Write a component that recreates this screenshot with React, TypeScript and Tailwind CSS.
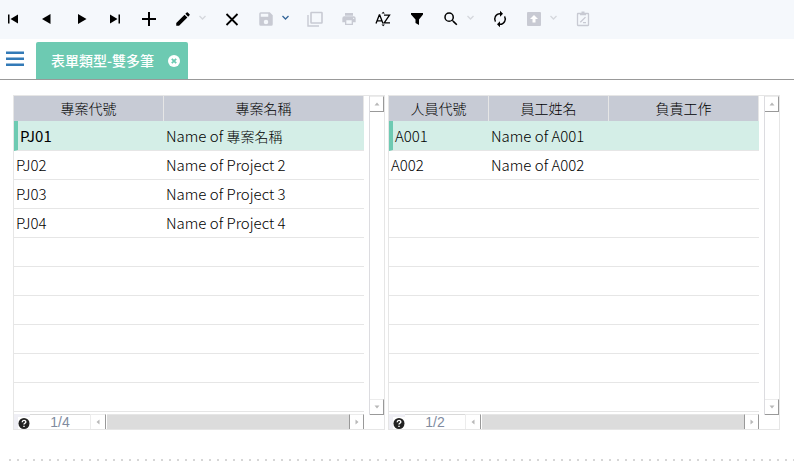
import { ReactNode } from "react";

type Column = { title: string; width: string };

function ToolButton({ label, children, muted = false }: { label: string; children: ReactNode; muted?: boolean }) {
  return (
    <button
      type="button"
      aria-label={label}
      className={`flex h-6 w-6 items-center justify-center ${muted ? "text-[#c8cad3]" : "text-black"}`}
    >
      {children}
    </button>
  );
}

function MenuButton({ label, active = false }: { label: string; active?: boolean }) {
  return (
    <button
      type="button"
      aria-label={label}
      className={`flex h-6 w-[15px] items-center justify-center pb-0.5 ${active ? "text-[#35679a]" : "text-[#d5d8dd]"}`}
    >
      <svg width="9" height="6" viewBox="0 0 9 6" fill="none" stroke="currentColor" strokeWidth="1.3">
        <path d="M1.500 1l3 3 3-3" />
      </svg>
    </button>
  );
}

function Glyph({ d, size = 18 }: { d: string; size?: number }) {
  return (
    <svg width={size} height={size} viewBox="0 0 24 24" fill="currentColor">
      <path d={d} />
    </svg>
  );
}

function Toolbar() {
  return (
    <div role="toolbar" className="flex h-[39px] items-start gap-[10px] bg-[#f5f8fc] pt-[7px] pl-px">
      <ToolButton label="First record">
        <svg width="12" height="12" viewBox="0 0 12 12" fill="currentColor">
          <path d="M1 1.500h1.500v9H1zM11 1.500v9L3.500 6z" />
        </svg>
      </ToolButton>
      <ToolButton label="Previous record">
        <svg width="12" height="12" viewBox="0 0 12 12" fill="currentColor">
          <path d="M9.500 1v10L1 6z" />
        </svg>
      </ToolButton>
      <ToolButton label="Next record">
        <svg width="12" height="12" viewBox="0 0 12 12" fill="currentColor">
          <path d="M3 1v10l8.500-5z" />
        </svg>
      </ToolButton>
      <ToolButton label="Last record">
        <svg width="12" height="12" viewBox="0 0 12 12" fill="currentColor">
          <path d="M9.500 1.500H11v9H9.500zM1 1.500v9L8.500 6z" />
        </svg>
      </ToolButton>
      <ToolButton label="Add">
        <svg width="14" height="14" viewBox="0 0 14 14" fill="currentColor">
          <path d="M6 0h2v6h6v2H8v6H6V8H0V6h6z" />
        </svg>
      </ToolButton>
      <div className="flex">
        <ToolButton label="Edit">
          <Glyph d="M3 17.250V21h3.750L17.810 9.940l-3.750-3.750L3 17.250zM20.710 7.040a1 1 0 0 0 0-1.410l-2.340-2.340a1 1 0 0 0-1.410 0l-1.830 1.830 3.750 3.750 1.830-1.830z" />
        </ToolButton>
        <MenuButton label="Edit options" />
      </div>
      <ToolButton label="Delete">
        <svg width="14" height="14" viewBox="0 0 14 14" fill="none" stroke="currentColor" strokeWidth="1.800">
          <path d="M1.500 2l11 11M12.500 2l-11 11" />
        </svg>
      </ToolButton>
      <div className="flex">
        <ToolButton label="Save" muted>
          <Glyph d="M17 3H5a2 2 0 0 0-2 2v14a2 2 0 0 0 2 2h14a2 2 0 0 0 2-2V7l-4-4zm-5 16a3 3 0 1 1 0-6 3 3 0 0 1 0 6zm3-10H5V5h10v4z" />
        </ToolButton>
        <MenuButton label="Save options" active />
      </div>
      <ToolButton label="Copy" muted>
        <svg width="16" height="16" viewBox="0 0 16 16" fill="none" stroke="currentColor">
          <rect x="4" y="1.500" width="11" height="10.500" rx="0.500" strokeWidth="1.600" />
          <path d="M1 4v11h11" strokeWidth="1.400" />
        </svg>
      </ToolButton>
      <ToolButton label="Print" muted>
        <Glyph
          size={16}
          d="M19 8H5a3 3 0 0 0-3 3v6h4v4h12v-4h4v-6a3 3 0 0 0-3-3zm-3 11H8v-5h8v5zm3-7a1 1 0 1 1 0-2 1 1 0 0 1 0 2zM18 3H6v4h12V3z"
        />
      </ToolButton>
      <ToolButton label="Sort">
        <svg width="16" height="16" viewBox="0 0 16 16" fill="none" stroke="currentColor" strokeWidth="1.300">
          <path d="M1 12.500L4.300 4h.4L8 12.500M2.200 9.800h4.600M9 4.200h5.500L9.200 11.800H15" />
          <path d="M6.500 2.500L8.200 .8l1.700 1.700zM6.500 13.500l1.700 1.700 1.700-1.700z" fill="currentColor" stroke="none" />
        </svg>
      </ToolButton>
      <ToolButton label="Filter">
        <svg width="14" height="14" viewBox="0 0 14 14" fill="currentColor">
          <path d="M1 1h12v1.500L9 7.500V13L5.500 11V7.500L1 2.500z" />
        </svg>
      </ToolButton>
      <div className="flex">
        <ToolButton label="Search">
          <Glyph d="M15.500 14h-.79l-.28-.27A6.471 6.471 0 0 0 16 9.500 6.500 6.500 0 1 0 9.500 16c1.610 0 3.090-.59 4.230-1.570l.27.28v.79l5 4.990L20.490 19l-4.990-5zm-6 0a4.500 4.500 0 1 1 0-9 4.500 4.500 0 0 1 0 9z" />
        </ToolButton>
        <MenuButton label="Search options" />
      </div>
      <ToolButton label="Refresh">
        <Glyph d="M12 6v3l4-4-4-4v3a8 8 0 0 0-6.760 12.260L6.700 14.800A5.870 5.870 0 0 1 6 12a6 6 0 0 1 6-6zm6.760 1.740L17.300 9.200A6 6 0 0 1 12 18v-3l-4 4 4 4v-3a8 8 0 0 0 6.760-12.260z" />
      </ToolButton>
      <div className="flex">
        <ToolButton label="Upload" muted>
          <svg width="14" height="14" viewBox="0 0 14 14">
            <rect width="14" height="14" rx="1" fill="currentColor" />
            <path d="M7 3l4 4H8.500v3.500h-3V7H3z" fill="white" />
          </svg>
        </ToolButton>
        <MenuButton label="Upload options" />
      </div>
      <ToolButton label="Approve" muted>
        <svg width="14" height="16" viewBox="0 0 14 16" fill="none" stroke="currentColor" strokeWidth="1.300">
          <rect x="1.500" y="2.500" width="11" height="12" rx="0.500" />
          <path d="M4 3.300h6M5.500 1.500h3" strokeWidth="1.800" />
          <path d="M7 11.700h3M4.300 11.300L9.500 6.100" strokeWidth="1.300" />
        </svg>
      </ToolButton>
    </div>
  );
}

function TabBar() {
  return (
    <div className="flex h-[41px] items-end border-b border-[#999999]">
      <button type="button" aria-label="Menu" className="flex h-[37px] w-9 items-center pl-1.5 text-[#337ab7]">
        <svg width="18" height="16" viewBox="0 0 18 16" fill="currentColor" className="mb-1">
          <path d="M0 .5h18V3H0zM0 6.500h18V9H0zM0 12.500h18V15H0z" />
        </svg>
      </button>
      <div className="flex h-[37px] items-center rounded-t-xs bg-[#6dcab2] pr-2 pl-[15px] text-white">
        <a href="#form" className="pb-0.5 text-sm font-medium">
          表單類型-雙多筆
        </a>
        <button type="button" aria-label="Close tab" className="ml-3.5">
          <svg width="12" height="12" viewBox="0 0 12 12">
            <circle cx="6" cy="6" r="6" fill="white" />
            <path d="M3.800 3.800l4.400 4.400M8.200 3.800L3.800 8.200" stroke="#6dcab2" strokeWidth="1.800" />
          </svg>
        </button>
      </div>
    </div>
  );
}

function Arrow({ d }: { d: string }) {
  return (
    <svg width="6" height="6" viewBox="0 0 6 6" fill="#b8b8b8">
      <path d={d} />
    </svg>
  );
}

function DataGrid({
  columns,
  rows,
  page,
  name,
  boldKey = false,
}: {
  columns: Column[];
  rows: ReactNode[][];
  page: string;
  name: string;
  boldKey?: boolean;
}) {
  const lines = Array.from({ length: 10 }, (_, i) => rows[i] ?? columns.map(() => ""));
  return (
    <section aria-label={name} className="flex border border-[#e6e6e6]">
      <div className="min-w-0 flex-1">
        <table className="w-full table-fixed border-separate border-spacing-0 text-black">
          <thead>
            <tr className="h-[25px] bg-[#c7cbd5] text-sm">
              {columns.map((c) => (
                <th key={c.title} className={`border-r border-[#e6e6e6] p-0 pb-0.5 leading-5 font-light ${c.width}`}>
                  {c.title}
                </th>
              ))}
            </tr>
          </thead>
          <tbody>
            {lines.map((row, i) => (
              <tr key={i} className={i === 0 ? "h-[30px] bg-[#d4eee7]" : "h-[29px]"}>
                {row.map((cell, j) => (
                  <td
                    key={j}
                    className={`truncate border-b border-[#e6e6e6] p-0 pl-0.5 text-[15px] leading-5 ${
                      i === 0 && j === 0 ? "border-l-4 border-l-[#6dcab2]" : ""
                    } ${i === 0 && j === 0 && boldKey ? "font-normal" : "font-light"}`}
                  >
                    {cell}
                  </td>
                ))}
              </tr>
            ))}
          </tbody>
        </table>
        <div className="mt-0.5 flex h-[15px]">
          <button type="button" aria-label="Help" className="flex w-4 items-end justify-end bg-[#efeff5]">
            <svg width="12" height="12" viewBox="0 0 12 12">
              <rect width="12" height="12" fill="white" />
              <circle cx="6" cy="6.500" r="5.500" fill="#222222" />
              <path d="M4.200 5.200c0-2.400 3.600-2.400 3.600-.2 0 1.300-1.800 1.200-1.800 2.500M6 8.700V10" stroke="white" strokeWidth="1.400" fill="none" />
            </svg>
          </button>
          <input
            aria-label={`${name} page`}
            readOnly
            value={page}
            className="w-[60px] border-t border-[#d9d9d9] bg-white text-center font-['Liberation_Sans',sans-serif] text-sm leading-[14px] text-[#808ba0]"
          />
          <button
            type="button"
            aria-label="Scroll left"
            className="flex w-4 items-center justify-center border-t border-r border-l border-[#ececec] border-r-[#999999]"
          >
            <Arrow d="M4.500 .5v5L1.500 3z" />
          </button>
          <div className="ml-px flex-1 border-t border-[#e6e6e6] bg-[#dcdcdc]" />
          <button
            type="button"
            aria-label="Scroll right"
            className="flex w-[15px] items-center justify-center border-x border-t border-x-[#999999] border-t-[#ececec]"
          >
            <Arrow d="M1.500 .5v5l3-2.500z" />
          </button>
        </div>
      </div>
      <div className="mb-3.5 ml-[5px] flex w-[15px] flex-col border-l border-[#dcdce0]">
        <button
          type="button"
          aria-label="Scroll up"
          className="flex h-4 items-center justify-center border-t border-r border-b border-[#999999] border-t-[#ececec]"
        >
          <Arrow d="M.5 4.500h5L3 1.500z" />
        </button>
        <div className="flex-1" />
        <button
          type="button"
          aria-label="Scroll down"
          className="flex h-4 items-center justify-center border-t border-r border-b border-[#999999] border-t-[#ececec]"
        >
          <Arrow d="M.5 1.500h5L3 4.500z" />
        </button>
      </div>
    </section>
  );
}

export default function App() {
  return (
    <div className="bg-white font-['Noto_Sans_CJK_TC',sans-serif]">
      <Toolbar />
      <TabBar />
      <main className="pt-[15px] pr-[14px] pl-[13px]">
        <div className="grid grid-cols-[372fr_392fr] gap-[3px]">
          <DataGrid
            name="Projects"
            boldKey
            columns={[
              { title: "專案代號", width: "w-[150px]" },
              { title: "專案名稱", width: "" },
            ]}
            rows={[
              ["PJ01", <>Name of <span className="text-sm">專案名稱</span></>],
              ["PJ02", "Name of Project 2"],
              ["PJ03", "Name of Project 3"],
              ["PJ04", "Name of Project 4"],
            ]}
            page="1/4"
          />
          <DataGrid
            name="Members"
            columns={[
              { title: "人員代號", width: "w-[100px]" },
              { title: "員工姓名", width: "w-[120px]" },
              { title: "負責工作", width: "" },
            ]}
            rows={[
              ["A001", "Name of A001", ""],
              ["A002", "Name of A002", ""],
            ]}
            page="1/2"
          />
        </div>
      </main>
      <div className="mt-[29px] ml-[9px] h-0.5 bg-[repeating-linear-gradient(to_right,#d6d6d6_0px,#d6d6d6_2px,transparent_2px,transparent_8px)]" />
    </div>
  );
}
